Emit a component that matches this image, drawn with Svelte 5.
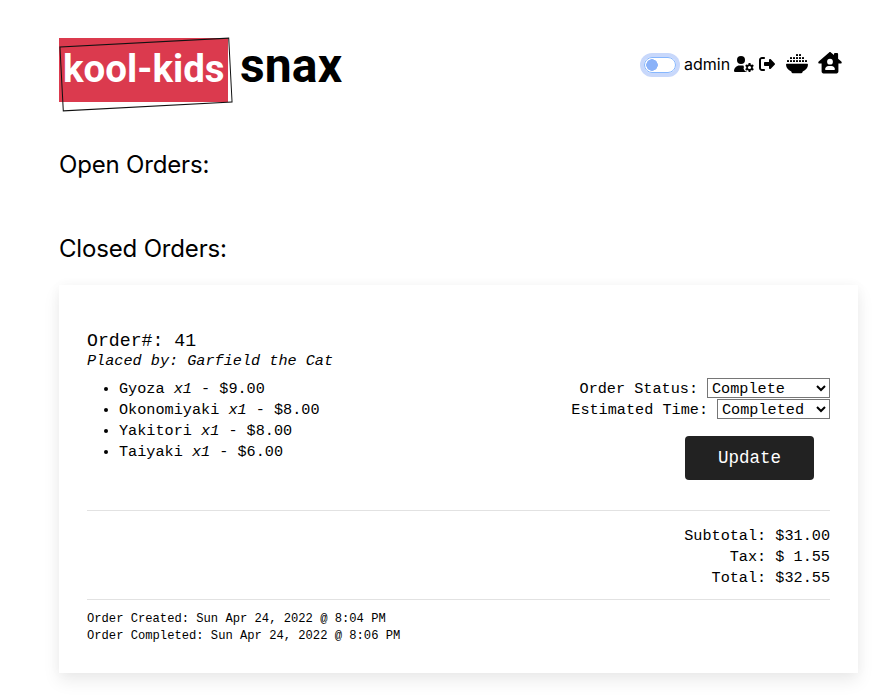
<script>
  const items = [
    { name: 'Gyoza', qty: 1, price: '9.00' },
    { name: 'Okonomiyaki', qty: 1, price: '8.00' },
    { name: 'Yakitori', qty: 1, price: '8.00' },
    { name: 'Taiyaki', qty: 1, price: '6.00' }
  ];
  const teeth = [0, 60, 120];
  const rice = [
    [10, 0], [13, 0],
    [4, 3], [7, 3], [10, 3], [13, 3], [16, 3],
    [1, 6], [4, 6], [7, 6], [10, 6], [13, 6], [16, 6], [19, 6]
  ];
  let status = $state('Complete');
  let estimate = $state('Completed');
</script>

<div class="page">
  <header>
    <h1><span class="badge">kool-kids</span><span class="snax">snax</span></h1>
    <nav>
      <span class="switch" role="switch" aria-checked="false" tabindex="0"></span>
      <span class="user">admin</span>
      <svg class="gear" width="20" height="16" viewBox="0 0 640 512">
        <circle cx="224" cy="128" r="128" />
        <path d="M178 304h92c14 0 26 1 38 4-6 20 3 36 18 45-17 12-25 32-18 53 10 33 30 61 58 82 14 9 30 9 42 4v20H30c-17 0-30-13-30-30 0-98 80-178 178-178z" />
        <g transform="translate(496 368)">
          {#each teeth as angle}
            <rect x="-33" y="-144" width="66" height="288" rx="14" transform="rotate({angle})" />
          {/each}
          <circle r="104" />
          <circle r="50" fill="#fff" />
        </g>
      </svg>
      <svg class="exit" width="16" height="16" viewBox="0 0 512 512">
        <path d="M377.9 105.9L500.7 228.7c7.2 7.2 11.3 17.1 11.3 27.3s-4.1 20.1-11.3 27.3L377.9 406.1c-6.4 6.4-15 9.9-24 9.9c-18.7 0-33.9-15.2-33.9-33.9l0-62.1-128 0c-17.7 0-32-14.3-32-32l0-64c0-17.7 14.3-32 32-32l128 0 0-62.1c0-18.7 15.2-33.9 33.9-33.9c9 0 17.6 3.6 24 9.9zM160 96L96 96c-17.7 0-32 14.3-32 32l0 256c0 17.7 14.3 32 32 32l64 0c17.7 0 32 14.3 32 32s-14.3 32-32 32l-64 0c-53 0-96-43-96-96L0 128C0 75 43 32 96 32l64 0c17.7 0 32 14.3 32 32s-14.3 32-32 32z" />
      </svg>
      <svg class="bowl" width="22" height="20" viewBox="0 0 22 20">
        {#each rice as [x, y]}
          <rect {x} y={y + 0.1} width="2" height="2" rx=".3" />
        {/each}
        <path d="M1 9.8h20c.6 0 1 .5 1 1-.2 3.100-2.200 5.500-5.300 6.600l-.2.8c-.2.600-.7 1-1.400 1H6.900c-.7 0-1.200-.4-1.400-1l-.2-.8C2.200 16.300.2 13.900 0 10.800c0-.5.400-1 1-1z" />
      </svg>
      <svg class="home" width="24" height="22" viewBox="0 0 24 22">
        <path fill-rule="evenodd" d="M11.100.4c.5-.5 1.300-.5 1.800 0L16 3.100V2c0-.5.400-.9.900-.9h2.300c.5 0 .9.4.9.9v4.700l3.200 2.900c.5.400.6 1.100.2 1.600-.2.300-.5.400-.9.400h-2.200v8c0 1-.8 1.800-1.800 1.800H5.400c-1 0-1.800-.8-1.800-1.800v-8H1.400c-.4 0-.7-.1-.9-.4-.4-.5-.3-1.200.2-1.600zM12 6.800a2.900 2.900 0 1 0 0 5.800 2.900 2.900 0 0 0 0-5.800zm-1.400 7.100c-2 0-3.500 1.500-3.500 3.400 0 .4.300.7.700.7h8.400c.4 0 .7-.3.7-.7 0-1.900-1.500-3.400-3.500-3.400z" />
      </svg>
    </nav>
  </header>

  <h2 class="open">Open Orders:</h2>
  <h2 class="closed">Closed Orders:</h2>

  <section class="card">
    <div class="number">Order#: 41</div>
    <div class="placed">Placed by: Garfield the Cat</div>
    <div class="details">
      <ul>
        {#each items as item}
          <li>{item.name} <em>x{item.qty}</em> - ${item.price}</li>
        {/each}
      </ul>
      <form onsubmit={(e) => e.preventDefault()}>
        <label>Order Status:
          <select class="status" bind:value={status}><option>Complete</option></select>
        </label>
        <label>Estimated Time:
          <select class="estimate" bind:value={estimate}><option>Completed</option></select>
        </label>
        <button>Update</button>
      </form>
    </div>
    <div class="totals">
      <div>Subtotal: $31.00</div>
      <div>Tax: $ 1.55</div>
      <div>Total: $32.55</div>
    </div>
    <div class="dates">
      <div>Order Created: Sun Apr 24, 2022 @ 8:04 PM</div>
      <div>Order Completed: Sun Apr 24, 2022 @ 8:06 PM</div>
    </div>
  </section>
</div>

<style>
  :global(body) { margin: 0; background: #fff; overflow: hidden; }
  .page {
    box-sizing: border-box;
    height: 696px;
    padding: 38px 22px 0 59px;
    color: #000;
    font-family: Inter, sans-serif;
  }
  header { display: flex; justify-content: space-between; height: 64px; }
  h1 { display: flex; margin: 0; font-family: Roboto, sans-serif; font-weight: 700; }
  .badge {
    position: relative;
    box-sizing: border-box;
    width: 169px;
    height: 64px;
    padding-left: 4px;
    background: #db3a4e;
    color: #fff;
    font-size: 38.5px;
    line-height: 62px;
    white-space: nowrap;
  }
  .badge::after {
    content: '';
    position: absolute;
    box-sizing: border-box;
    left: 2px;
    top: 4px;
    width: 170px;
    height: 65px;
    border: 1px solid #111;
    transform: rotate(-3deg);
  }
  .snax { padding-left: 12px; font-size: 48px; letter-spacing: .15px; line-height: 55px; }
  nav { display: flex; align-items: flex-start; padding: 14px 16px 0 0; }
  .switch {
    box-sizing: border-box;
    width: 32px;
    height: 16px;
    margin: 5px 8px 0 0;
    border: 1px solid #86b7fe;
    border-radius: 8px;
    background: radial-gradient(circle at 7px 7px, #8bb2f8 5.500px, #fff 6px);
    box-shadow: 0 0 0 4px #c8d8fb;
  }
  .user { width: 50px; font-size: 16px; line-height: 24px; }
  .gear { margin-top: 4px; }
  .exit { margin: 4px 0 0 5px; }
  .bowl { margin: 2px 1px 0 11px; }
  .home { margin-left: 9px; }
  h2 { margin: 0; font-size: 24px; font-weight: 400; letter-spacing: -.17px; line-height: 30px; }
  .open { margin-top: 48px; }
  .closed { margin-top: 54px; }
  .card {
    box-sizing: border-box;
    width: 799px;
    height: 388px;
    margin-top: 21px;
    padding: 45px 28px 0;
    background: #fff;
    box-shadow: 0 8px 16px rgba(0, 0, 0, .08), 0 0 12px rgba(0, 0, 0, .03);
    font-family: 'Liberation Mono', monospace;
    font-size: 15.2px;
    line-height: 21px;
  }
  .number { font-size: 18.2px; line-height: 22px; }
  .placed { font-style: italic; line-height: 19px; }
  .details { display: flex; justify-content: space-between; height: 132px; padding-top: 7px; }
  ul { margin: 0; padding: 1px 0 0 32px; }
  li::marker { font-size: 14px; }
  form { display: flex; flex-direction: column; align-items: flex-end; }
  label { display: flex; align-items: flex-start; gap: 9px; height: 21px; line-height: 23px; white-space: nowrap; }
  select {
    height: 20px;
    margin: 0;
    padding: 0;
    border: 1px solid #767676;
    border-radius: 0;
    background: #fff;
    color: #000;
    font-family: inherit;
    font-size: inherit;
  }
  .status { width: 123px; }
  .estimate { width: 113px; }
  button {
    width: 129px;
    height: 44px;
    margin: 16px 16px 0 0;
    padding: 0;
    border: 0;
    border-radius: 4px;
    background: #222;
    color: #fff;
    font-family: inherit;
    font-size: 17.5px;
  }
  .totals {
    height: 73px;
    padding-top: 15px;
    border: solid #e2e2e2;
    border-width: 1px 0;
    text-align: right;
  }
  .dates { padding-top: 11px; font-size: 12.15px; line-height: 17px; }
</style>
